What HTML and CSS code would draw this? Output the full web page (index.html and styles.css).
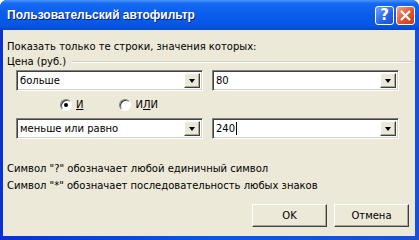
FILE: index.html
```html
<!DOCTYPE html>
<html lang="ru">
<head>
    <meta charset="UTF-8">
    <title>Пользовательский автофильтр</title>
    <link rel="stylesheet" href="styles.css">
</head>
<body>

<div class="window">
    <!-- Title bar -->
    <div class="titlebar">
        <span class="title">Пользовательский автофильтр</span>
        <div class="title-buttons">
            <span class="tbtn help">?</span>
            <span class="tbtn close">
                <svg width="11" height="11" viewBox="0 0 11 11">
                    <path d="M1 1 L10 10 M10 1 L1 10" stroke="#fff" stroke-width="2.2"/>
                </svg>
            </span>
        </div>
    </div>

    <div class="client">
        <div class="caption">Показать только те строки, значения которых:</div>

        <div class="group-head">
            <span>Цена (руб.)</span>
            <span class="groove"></span>
        </div>

        <div class="row first">
            <div class="combo"><span class="value">больше</span><span class="arrow"></span></div>
            <div class="combo"><span class="value">80</span><span class="arrow"></span></div>
        </div>

        <div class="radios">
            <label class="radio"><span class="dot checked"></span><span><u>И</u></span></label>
            <label class="radio"><span class="dot"></span><span>И<u>Л</u>И</span></label>
        </div>

        <div class="row">
            <div class="combo"><span class="value">меньше или равно</span><span class="arrow"></span></div>
            <div class="combo"><span class="value">240<span class="caret"></span></span><span class="arrow"></span></div>
        </div>

        <div class="hints">
            <div>Символ "?" обозначает любой единичный символ</div>
            <div>Символ "*" обозначает последовательность любых знаков</div>
        </div>

        <div class="actions">
            <button class="btn">OK</button>
            <button class="btn">Отмена</button>
        </div>
    </div>
</div>

</body>
</html>
```

FILE: styles.css
```css
body {
    margin: 0;
    font-family: "DejaVu Sans", Verdana, sans-serif;
    font-size: 10px;
    color: #000;
}

.window {
    width: 419px;
    height: 240px;
    background: linear-gradient(to right, #0831D9, #0A55E8 50%, #1A4FD8);
    display: flex;
    flex-direction: column;
    box-sizing: border-box;
    border-radius: 7px 7px 0 0;
    overflow: hidden;
}

.titlebar {
    height: 30px;
    flex-shrink: 0;
    display: flex;
    align-items: center;
    justify-content: space-between;
    padding: 0 4px 0 7px;
    background: linear-gradient(to bottom, #4A95F8 0%, #1468F2 12%, #0A5DEB 50%, #0556E3 85%, #0846CC 100%);
}

.title {
    color: #fff;
    font-family: "Liberation Sans", Arial, sans-serif;
    font-weight: bold;
    font-size: 12px;
    text-shadow: 1px 1px 0 #0A1E78;
}

.title-buttons {
    display: flex;
    gap: 2px;
}

.tbtn {
    width: 19px;
    height: 19px;
    box-sizing: border-box;
    border: 1px solid #fff;
    border-radius: 3px;
    display: flex;
    align-items: center;
    justify-content: center;
    color: #fff;
}

.help {
    background: linear-gradient(135deg, #6EA2FF, #2663E8 60%, #1A4FD0);
    font-family: "DejaVu Sans", sans-serif;
    font-weight: bold;
    font-size: 15px;
}

.close {
    background: linear-gradient(135deg, #F2A286, #E0552E 55%, #C53A14);
}

.client {
    flex: 1;
    margin: 0 4px 4px 3px;
    background: #ECE9D8;
    padding: 10px 4px 0 4px;
    display: flex;
    flex-direction: column;
}

.caption {
    line-height: 13px;
}

.group-head {
    display: flex;
    align-items: center;
    gap: 6px;
    line-height: 13px;
    margin-top: 2px;
}

.groove {
    flex: 1;
    height: 0;
    border-top: 1px solid #D0D0BF;
    border-bottom: 1px solid #fff;
}

.row {
    display: flex;
    gap: 9px;
    padding-left: 9px;
}

.row.first {
    margin-top: 2px;
}

.combo {
    width: 187px;
    height: 21px;
    box-sizing: border-box;
    background: #fff;
    border-top: 1px solid #808080;
    border-left: 1px solid #808080;
    border-right: 1px solid #fff;
    border-bottom: 1px solid #fff;
    box-shadow: inset 1px 1px 0 #404040, inset -1px -1px 0 #D4D0C8;
    display: flex;
    align-items: center;
    padding: 2px 2px 2px 3px;
}

.value {
    flex: 1;
    display: flex;
    align-items: center;
}

.caret {
    width: 1px;
    height: 13px;
    background: #000;
    margin-left: 1px;
}

.arrow {
    width: 16px;
    height: 15px;
    box-sizing: border-box;
    background: #ECE9D8;
    border-top: 1px solid #fff;
    border-left: 1px solid #fff;
    border-right: 1px solid #404040;
    border-bottom: 1px solid #404040;
    box-shadow: inset -1px -1px 0 #ACA899;
    position: relative;
}

.arrow::after {
    content: '';
    position: absolute;
    left: 4px;
    top: 5px;
    border-left: 3.5px solid transparent;
    border-right: 3.5px solid transparent;
    border-top: 4px solid #000;
}

.radios {
    display: flex;
    gap: 36px;
    padding-left: 53px;
    height: 27px;
    align-items: center;
}

.radio {
    display: flex;
    align-items: center;
    gap: 4px;
}

.dot {
    width: 12px;
    height: 12px;
    box-sizing: border-box;
    border-radius: 50%;
    background: #fff;
    border: 1px solid;
    border-color: #808080 #fff #fff #808080;
    box-shadow: inset 1px 1px 0 #404040;
    position: relative;
}

.dot.checked::after {
    content: '';
    position: absolute;
    left: 3px;
    top: 3px;
    width: 4px;
    height: 4px;
    border-radius: 50%;
    background: #000;
}

.hints {
    margin-top: 21px;
    line-height: 17px;
}

.actions {
    display: flex;
    justify-content: flex-end;
    gap: 7px;
    margin-top: 10px;
    padding-right: 2px;
}

.btn {
    width: 75px;
    height: 23px;
    font-family: "DejaVu Sans", Verdana, sans-serif;
    font-size: 10px;
    background: #ECE9D8;
    border: 1px solid;
    border-color: #fff #404040 #404040 #fff;
    box-shadow: inset -1px -1px 0 #ACA899;
    padding: 0;
}
```
